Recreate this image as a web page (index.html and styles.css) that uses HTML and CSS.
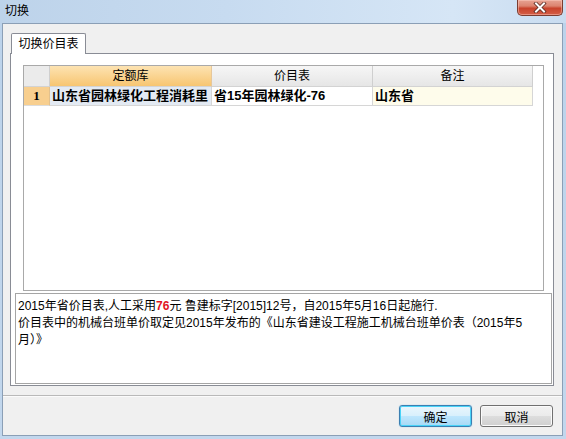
FILE: index.html
```html
<!DOCTYPE html>
<html lang="zh-CN">
<head>
<meta charset="utf-8">
<title>切换</title>
<link rel="stylesheet" href="styles.css">
</head>
<body>
<div class="window">
  <div class="titlebar">
    <span class="title">切换</span>
    <div class="close">
      <svg width="18" height="11" viewBox="0 0 18 11">
        <path d="M5 1.5 L13 9.5 M13 1.5 L5 9.5" stroke="#5a2a22" stroke-width="3.6" stroke-linecap="square" fill="none"/>
        <path d="M5 1.5 L13 9.5 M13 1.5 L5 9.5" stroke="#ffffff" stroke-width="2" stroke-linecap="square" fill="none"/>
      </svg>
    </div>
  </div>
  <div class="client">
    <div class="main">
      <div class="tabs"><div class="tab">切换价目表</div></div>
      <div class="panel">
        <div class="grid">
          <div class="hdr corner"></div>
          <div class="hdr sel">定额库</div>
          <div class="hdr">价目表</div>
          <div class="hdr last">备注</div>
          <div class="ind">1</div>
          <div class="cell c1">山东省园林绿化工程消耗里</div>
          <div class="cell">省15年园林绿化-76</div>
          <div class="cell c3">山东省</div>
        </div>
        <div class="memo">2015年省价目表,人工采用<span class="red">76</span>元 鲁建标字[2015]12号，自2015年5月16日起施行.<br>价目表中的机械台班单价取定见2015年发布的《山东省建设工程施工机械台班单价表（2015年5<br>月）》</div>
      </div>
    </div>
    <div class="footer">
      <button class="btn default">确定</button>
      <button class="btn">取消</button>
    </div>
  </div>
</div>
</body>
</html>
```
FILE: styles.css
```css
html, body {
  margin: 0;
  padding: 0;
}
* {
  box-sizing: border-box;
}
body {
  width: 566px;
  height: 439px;
  overflow: hidden;
  font-family: "Liberation Sans", "Noto Sans CJK SC", sans-serif;
  font-size: 12px;
  color: #000;
  background: #c3d8ee;
}
.window {
  width: 566px;
  height: 439px;
  display: flex;
  flex-direction: column;
  background: linear-gradient(to bottom, #c9dcf1 0px, #bcd3eb 23px, #c2d7ed 100%);
}
.titlebar {
  flex: 0 0 23px;
  height: 23px;
  display: flex;
  align-items: flex-start;
  background: linear-gradient(to right, #bdd3ea 0%, #c7dbf0 40%, #d6e6f6 80%, #c9dcf0 100%);
}
.title {
  margin: 3px 0 0 5px;
  line-height: 16px;
  font-size: 12px;
}
.close {
  margin-left: auto;
  margin-right: 3px;
  width: 46px;
  height: 16px;
  border: 1px solid #7b3c30;
  border-top: none;
  border-radius: 0 0 5px 5px;
  background: linear-gradient(to bottom, #e7a393 0%, #dc8470 40%, #c8432c 55%, #d45e47 100%);
  box-shadow: inset 0 0 0 1px rgba(255,210,200,0.45);
  display: flex;
  align-items: center;
  justify-content: center;
}
.close svg { display: block; }
.client {
  flex: 1 1 auto;
  min-height: 0;
  margin: 0 3px 3px 2px;
  border: 1px solid #8b9fb6;
  background: #f0f0f0;
  display: flex;
  flex-direction: column;
}
.main {
  flex: 0 0 auto;
  padding: 9px 8px 9px 7px;
}
.tabs {
  display: flex;
  padding-left: 1px;
}
.tab {
  width: 75px;
  height: 21px;
  border: 1px solid #898c95;
  border-bottom: none;
  border-radius: 2px 2px 0 0;
  background: #fff;
  margin-bottom: -1px;
  position: relative;
  line-height: 20px;
  text-align: center;
  font-size: 12px;
}
.panel {
  height: 333px;
  border: 1px solid #898c95;
  background: #fff;
  padding: 11px 1px 0 4px;
  display: flex;
  flex-direction: column;
}
.grid {
  flex: 0 0 auto;
  margin: 0 8px 0 8px;
  height: 226px;
  border: 1px solid #a9a9a9;
  background: #fff;
  display: grid;
  grid-template-columns: 26px 162px 161px 160px;
  grid-template-rows: 21px 19px;
  align-content: start;
}
.hdr {
  background: linear-gradient(to bottom, #f6f6f6, #e6e6e6);
  border-right: 1px solid #cfcfcf;
  border-bottom: 1px solid #d3d3d3;
  text-align: center;
  line-height: 20px;
  font-size: 12px;
}
.hdr.corner {
  background: #ebebeb;
}
.hdr.sel {
  background: linear-gradient(to bottom, #fde3b2, #f7c571);
  border-right-color: #e6c79a;
}
.ind {
  background: #f8cf8f;
  border-right: 1px solid #e2c18e;
  border-bottom: 1px solid #dcdcdc;
  font-weight: bold;
  text-align: center;
  line-height: 18px;
  font-family: "Liberation Serif", serif;
  font-size: 13px;
}
.cell {
  border-right: 1px solid #d6d6d6;
  border-bottom: 1px solid #d6d6d6;
  font-weight: bold;
  font-size: 13px;
  line-height: 18px;
  padding-left: 2px;
  white-space: nowrap;
  overflow: hidden;
}
.cell.c1 {
  background: #e3eaf3;
}
.cell.c3 {
  background: #fefceb;
}
.memo {
  flex: 0 0 auto;
  margin-top: 2px;
  height: 91px;
  border: 1px solid #a5a5a5;
  background: #fff;
  padding: 4px 2px 0 2px;
  line-height: 17px;
  font-size: 12px;
}
.red {
  color: #e0141e;
  font-weight: bold;
}
.footer {
  flex: 1 1 auto;
  border-top: 1px solid #b9b9b9;
  box-shadow: inset 0 1px 0 #fbfbfb;
  display: flex;
  justify-content: flex-end;
  align-items: flex-start;
  gap: 8px;
  padding: 9px 9px 0 0;
}
.btn {
  width: 73px;
  height: 22px;
  margin: 0;
  padding: 0;
  font-family: "Liberation Sans", "Noto Sans CJK SC", sans-serif;
  font-size: 12px;
  color: #000;
  border: 1px solid #707070;
  border-radius: 3px;
  background: linear-gradient(to bottom, #f2f2f2 0%, #ebebeb 48%, #dddddd 52%, #cfcfcf 100%);
  box-shadow: inset 0 0 0 1px #fbfbfb;
}
.btn.default {
  border-color: #3c7fb1;
  background: linear-gradient(to bottom, #eaf6fd 0%, #d9f0fc 48%, #bee6fd 52%, #a7d9f5 100%);
  box-shadow: inset 0 0 0 1px #48d3f8, 0 0 1px #5bb9e6;
}
```
